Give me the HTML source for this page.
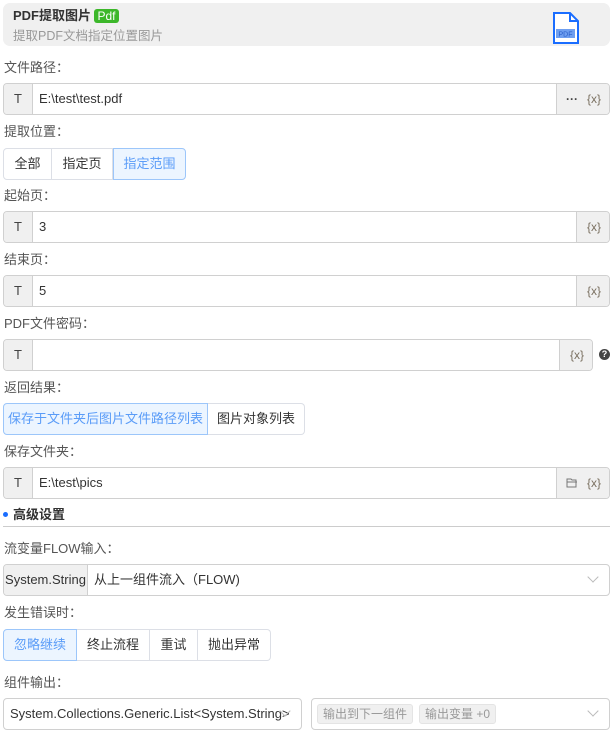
<!DOCTYPE html>
<html><head><meta charset="utf-8"><style>
*{box-sizing:border-box;margin:0;padding:0}
body{width:614px;height:733px;background:#fff;font-family:"Liberation Sans","Noto Sans CJK SC",sans-serif;font-size:13px;color:#333;position:relative;overflow:hidden}
.a{position:absolute}
.lbl{position:absolute;left:4px;color:#555;font-size:13px;line-height:16px}
.inp{position:absolute;left:3px;height:32px;border:1px solid #d0d0d0;border-radius:4px;background:#fff;overflow:hidden}
.pre{position:absolute;left:0;top:0;bottom:0;width:29px;background:#f0f0f0;border-right:1px solid #d0d0d0;text-align:center;line-height:30px;color:#444}
.val{position:absolute;left:35px;top:0;line-height:30px;color:#333}
.suf{position:absolute;right:0;top:0;bottom:0;background:#f0f0f0;border-left:1px solid #d0d0d0;line-height:30px;color:#7a7060;font-size:12px}
.x{position:absolute;right:8px;top:0}
.grp{position:absolute;left:3px;height:32px;display:flex}
.grp div{height:32px;border:1px solid #dcdfe6;border-left:none;line-height:30px;text-align:center;color:#333;background:#fff}
.grp div:first-child{border-left:1px solid #dcdfe6;border-radius:4px 0 0 4px}
.grp div:last-child{border-radius:0 4px 4px 0}
.grp div.on{background:#ecf5ff;color:#5a9cf8;border-color:#9cc6fa;border-left:1px solid #9cc6fa}
.chev{position:absolute;top:8px;width:8px;height:8px;border-right:1px solid #bbb;border-bottom:1px solid #bbb;transform:rotate(45deg)}
.tag{position:absolute;top:5px;height:20px;background:#f0f0f0;border:1px solid #e4e4e4;border-radius:3px;color:#999;font-size:12px;line-height:18px;padding:0 5px}
</style></head><body>
<div class="a" style="left:3px;top:3px;width:607px;height:43px;background:#f0f0f0;border-radius:7px"></div>
<div class="a" style="left:13px;top:8px;font-weight:bold;color:#333;font-size:13px;line-height:16px;display:flex;align-items:center">PDF提取图片<span style="display:inline-block;margin-left:3px;width:25px;height:14px;background:#3cb72a;border-radius:3px;color:#fff;font-size:12px;line-height:14px;text-align:center;font-weight:normal">Pdf</span></div>
<div class="a" style="left:13px;top:28px;color:#999;font-size:12.5px;line-height:16px">提取PDF文档指定位置图片</div>
<svg class="a" style="left:552px;top:12px" width="28" height="32" viewBox="0 0 28 32"><path d="M2 1H18L26 9V31H2Z" fill="#fff" stroke="#1a6dff" stroke-width="2"/><path d="M18 1V9H26" fill="none" stroke="#1a6dff" stroke-width="2"/><rect x="4" y="17" width="19" height="9" fill="#6f9ff0"/><text x="13.5" y="24.5" font-size="7" fill="#2a5ec8" text-anchor="middle" font-family="Liberation Sans">PDF</text></svg>

<div class="lbl" style="top:60px">文件路径：</div>
<div class="inp" style="top:83px;width:607px"><div class="pre">T</div><div class="val">E:\test\test.pdf</div><div class="suf" style="width:53px"><span class="a" style="left:9px;font-weight:bold;color:#444">···</span><span class="x">{x}</span></div></div>

<div class="lbl" style="top:124px">提取位置：</div>
<div class="grp" style="top:148px"><div style="width:49px">全部</div><div style="width:61px">指定页</div><div class="on" style="width:73px">指定范围</div></div>

<div class="lbl" style="top:188px">起始页：</div>
<div class="inp" style="top:211px;width:607px"><div class="pre">T</div><div class="val">3</div><div class="suf" style="width:33px"><span class="x">{x}</span></div></div>

<div class="lbl" style="top:252px">结束页：</div>
<div class="inp" style="top:275px;width:607px"><div class="pre">T</div><div class="val">5</div><div class="suf" style="width:33px"><span class="x">{x}</span></div></div>

<div class="lbl" style="top:316px">PDF文件密码：</div>
<div class="inp" style="top:339px;width:590px"><div class="pre">T</div><div class="suf" style="width:33px"><span class="x">{x}</span></div></div>
<div class="a" style="left:599px;top:349px;width:11px;height:11px;border-radius:50%;background:#444;color:#fff;font-size:9px;line-height:11px;text-align:center;font-weight:bold">?</div>

<div class="lbl" style="top:380px">返回结果：</div>
<div class="grp" style="top:403px"><div class="on" style="width:205px">保存于文件夹后图片文件路径列表</div><div style="width:97px">图片对象列表</div></div>

<div class="lbl" style="top:444px">保存文件夹：</div>
<div class="inp" style="top:467px;width:607px"><div class="pre">T</div><div class="val">E:\test\pics</div><div class="suf" style="width:53px"><svg class="a" style="left:9px;top:10px" width="12" height="10" viewBox="0 0 12 10"><path d="M1 1H5L6 2H10V9H1Z M1 4H11" fill="none" stroke="#777" stroke-width="1"/></svg><span class="x">{x}</span></div></div>

<div class="a" style="left:3px;top:512px;width:5px;height:5px;border-radius:50%;background:#1a6dff"></div>
<div class="a" style="left:13px;top:507px;font-weight:bold;color:#333;line-height:16px">高级设置</div>
<div class="a" style="left:3px;top:526px;width:607px;height:1px;background:#ccc"></div>

<div class="lbl" style="top:541px">流变量FLOW输入：</div>
<div class="inp" style="top:564px;width:607px"><div class="pre" style="width:84px;color:#333">System.String</div><div class="val" style="left:90px">从上一组件流入（FLOW)</div><div class="chev" style="right:12px"></div></div>

<div class="lbl" style="top:605px">发生错误时：</div>
<div class="grp" style="top:629px"><div class="on" style="width:74px">忽略继续</div><div style="width:73px">终止流程</div><div style="width:48px">重试</div><div style="width:73px">抛出异常</div></div>

<div class="lbl" style="top:675px">组件输出：</div>
<div class="inp" style="top:698px;width:299px"><div class="val" style="left:6px">System.Collections.Generic.List&lt;System.String&gt;</div><div class="chev" style="right:12px"></div></div>
<div class="inp" style="top:698px;left:311px;width:299px"><div class="tag" style="left:5px">输出到下一组件</div><div class="tag" style="left:107px">输出变量 +0</div><div class="chev" style="right:12px"></div></div>
</body></html>
